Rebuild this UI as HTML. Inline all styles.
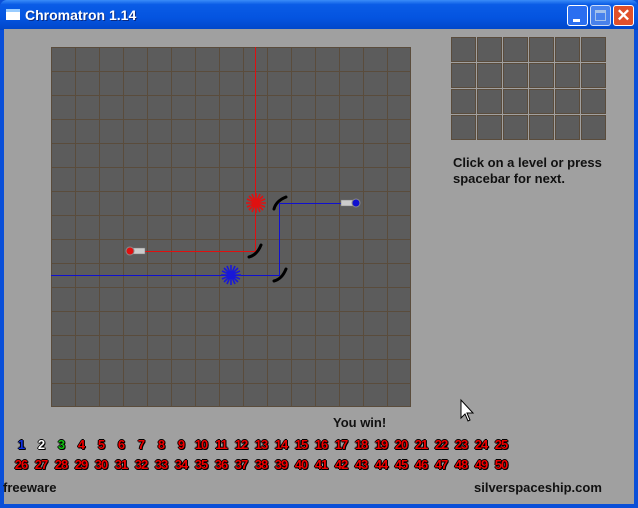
<!DOCTYPE html>
<html><head><style>
*{margin:0;padding:0;box-sizing:border-box}
body{width:638px;height:508px;overflow:hidden;background:#0a4fd8;font-family:"Liberation Sans",sans-serif;position:relative}
.title{position:absolute;left:0;top:0;width:638px;height:30px;background:linear-gradient(#3a8cf8 0%,#0a5ce6 15%,#0454e0 60%,#0046c8 100%);border-radius:7px 7px 0 0}
.ttext{position:absolute;left:25px;top:7px;color:#fff;font-weight:bold;font-size:14px;text-shadow:1px 1px #0a2a80}
.client{position:absolute;left:4px;top:29px;width:630px;height:475px;background:#a0a0a0}
.lv{position:absolute;font-weight:bold;font-size:13px;color:#e00;text-shadow:1px 0 #000,-1px 0 #000,0 1px #000,0 -1px #000,1px 1px #000;width:20px;text-align:center;letter-spacing:-1px}
.t{position:absolute;font-weight:bold;font-size:13px;color:#111}
</style></head><body>
<div class="title">
<div style="position:absolute;left:6px;top:9px;width:14px;height:11px;background:#fff;border-top:3px solid #9cf"></div>
<div class="ttext">Chromatron 1.14</div>
<div style="position:absolute;left:567px;top:5px;width:21px;height:21px;border:1px solid #fff;border-radius:3px;background:#2a6ef0"><div style="position:absolute;left:5px;top:13px;width:7px;height:3px;background:#fff"></div></div>
<div style="position:absolute;left:590px;top:5px;width:21px;height:21px;border:1px solid #fff;border-radius:3px;background:#5a8ef0;opacity:.8"><div style="position:absolute;left:4px;top:4px;width:11px;height:11px;border:1px solid #cde;border-top-width:3px"></div></div>
<div style="position:absolute;left:613px;top:5px;width:21px;height:21px;border:1px solid #fff;border-radius:3px;background:#e0502a;color:#fff;font-size:17px;font-weight:bold;text-align:center;line-height:19px">✕</div>
</div>
<div class="client"></div>
<svg style="position:absolute;left:0;top:0" width="638" height="508">
<rect x="51" y="47" width="360" height="360" fill="#5c5c5c"/>
<g stroke="#5a4c3c" stroke-width="1">
<path d="M51.5 47V407M75.5 47V407M99.5 47V407M123.5 47V407M147.5 47V407M171.5 47V407M195.5 47V407M219.5 47V407M243.5 47V407M267.5 47V407M291.5 47V407M315.5 47V407M339.5 47V407M363.5 47V407M387.5 47V407M410.5 47V407"/>
<path d="M51 47.5H411M51 71.5H411M51 95.5H411M51 119.5H411M51 143.5H411M51 167.5H411M51 191.5H411M51 215.5H411M51 239.5H411M51 263.5H411M51 287.5H411M51 311.5H411M51 335.5H411M51 359.5H411M51 383.5H411M51 406.5H411"/>
</g>
<g fill="#5c5c5c" stroke="#5a4c3c">
<rect x="451.5" y="37.5" width="24" height="24"/><rect x="477.5" y="37.5" width="24" height="24"/><rect x="503.5" y="37.5" width="24" height="24"/><rect x="529.5" y="37.5" width="24" height="24"/><rect x="555.5" y="37.5" width="24" height="24"/><rect x="581.5" y="37.5" width="24" height="24"/>
<rect x="451.5" y="63.5" width="24" height="24"/><rect x="477.5" y="63.5" width="24" height="24"/><rect x="503.5" y="63.5" width="24" height="24"/><rect x="529.5" y="63.5" width="24" height="24"/><rect x="555.5" y="63.5" width="24" height="24"/><rect x="581.5" y="63.5" width="24" height="24"/>
<rect x="451.5" y="89.5" width="24" height="24"/><rect x="477.5" y="89.5" width="24" height="24"/><rect x="503.5" y="89.5" width="24" height="24"/><rect x="529.5" y="89.5" width="24" height="24"/><rect x="555.5" y="89.5" width="24" height="24"/><rect x="581.5" y="89.5" width="24" height="24"/>
<rect x="451.5" y="115.5" width="24" height="24"/><rect x="477.5" y="115.5" width="24" height="24"/><rect x="503.5" y="115.5" width="24" height="24"/><rect x="529.5" y="115.5" width="24" height="24"/><rect x="555.5" y="115.5" width="24" height="24"/><rect x="581.5" y="115.5" width="24" height="24"/>
</g>
<path d="M255.5 47V251.5H135" stroke="#e01010" fill="none"/>
<path d="M51 275.5H279.5V203.5H345" stroke="#1010d0" fill="none"/>
<g stroke="#e01010" stroke-width="1.6"><path d="M256 193v20M246 203h20M249 196l14 14M263 196l-14 14M252 194l8 18M260 194l-8 18M247 199l18 8M265 199l-18 8"/></g>
<g stroke="#1818d8" stroke-width="1.6"><path d="M231 265v20M221 275h20M224 268l14 14M238 268l-14 14M227 266l8 18M235 266l-8 18M222 271l18 8M240 271l-18 8"/></g>
<g stroke="#000" stroke-width="3" fill="none" stroke-linecap="round"><path d="M274 209q2-8 12-12"/><path d="M249 257q8-2 12-12"/><path d="M274 281q8-2 12-12"/></g>
<rect x="130" y="248" width="15" height="6" fill="#ccc" stroke="#777" stroke-width=".5"/>
<circle cx="130" cy="251" r="4" fill="#e01010" stroke="#888"/>
<rect x="341" y="200" width="15" height="6" fill="#ccc" stroke="#777" stroke-width=".5"/>
<circle cx="356" cy="203" r="4" fill="#1010d0" stroke="#888"/>
<path d="M461 400v18l4-4 3 7 2-1-3-7h6z" fill="#fff" stroke="#000"/>
</svg>
<div class="t" style="left:453px;top:155px;line-height:16px">Click on a level or press<br>spacebar for next.</div>
<div class="t" style="left:333px;top:415px">You win!</div>
<div class="t" style="left:3px;top:480px">freeware</div>
<div class="t" style="left:474px;top:480px">silverspaceship.com</div>
<div id="lv"></div>
<script>
var h='';for(var i=1;i<=50;i++){var r=i<=25?0:1,c=(i-1)%25;var col=i==1?'#1030e0':i==2?'#fff':i==3?'#10c010':'#e00';h+='<div class="lv" style="left:'+(11+c*20)+'px;top:'+(437+r*20)+'px;color:'+col+'">'+i+'</div>';}document.getElementById('lv').innerHTML=h;
</script>
</body></html>
